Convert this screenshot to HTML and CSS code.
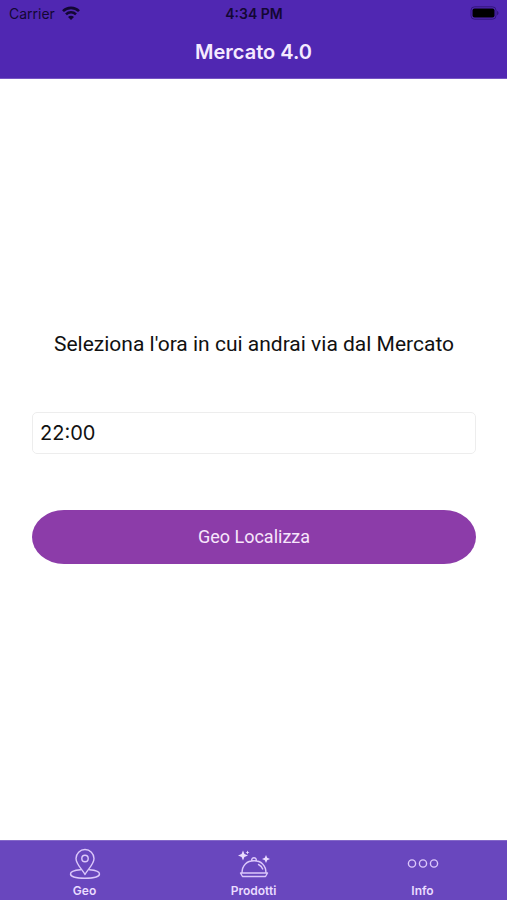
FILE: index.html
```html
<!DOCTYPE html>
<html lang="it">
<head>
<meta charset="utf-8">
<meta name="viewport" content="width=device-width, initial-scale=1">
<title>Mercato 4.0</title>
<link rel="stylesheet" href="styles.css">
</head>
<body>
<header class="top">
  <div class="status">
    <span class="carrier">Carrier
      <svg width="18" height="14" viewBox="0 0 18 14" aria-hidden="true">
        <g fill="none" stroke="currentColor" stroke-width="2.6">
          <path d="M1 5.200C5.400.8 12.600.8 17 5.200"/>
          <path d="M4 8.300C6.800 5.500 11.200 5.500 14 8.300"/>
        </g>
        <path d="M9 14 6 11C7.700 9.400 10.300 9.400 12 11Z" fill="currentColor"/>
      </svg>
    </span>
    <span class="time">4:34 PM</span>
    <svg class="battery" width="30" height="14" viewBox="0 0 30 14" aria-hidden="true">
      <rect x="2" y=".8" width="25" height="12.400" rx="3.500" fill="none" stroke="#32167c"/>
      <rect x="3.500" y="2.500" width="22" height="9" rx="2" fill="#000"/>
      <path d="M28 5v4.200c2-.7 2-3.500 0-4.200Z" fill="#32167c"/>
    </svg>
  </div>
  <h1 class="title">Mercato 4.0</h1>
</header>
<main class="content">
  <form class="form">
    <label class="prompt" for="ora">Seleziona l'ora in cui andrai via dal Mercato</label>
    <input class="field" id="ora" type="text" value="22:00">
    <button class="action" type="button">Geo Localizza</button>
  </form>
</main>
<nav class="tabs">
  <a class="tab" href="#geo">
    <svg width="32" height="32" viewBox="0 0 32 32" aria-hidden="true">
      <path d="M16 26.500C13.500 21.500 7 16.500 7 10.500a9 9 0 0 1 18 0C25 16.500 18.500 21.500 16 26.500Z"/>
      <circle cx="16" cy="10.500" r="3.200"/>
      <path d="M11.500 21.800C5 22.300 1.500 24 1.500 26c0 2.600 6 4.300 14.500 4.300s14.500-1.700 14.500-4.300c0-2-3.500-3.700-10-4.200"/>
    </svg>
    <span>Geo</span>
  </a>
  <a class="tab" href="#prodotti">
    <svg width="32" height="32" viewBox="0 0 32 32" aria-hidden="true">
      <path d="M2.500 25h27l-2 3.500h-23ZM4 25C4 17 9 12.800 16 12.800S28 17 28 25M13.700 12.800c-.5-4 5.100-4 4.600 0M20.500 16.500c2.200 1 3.500 2.500 4.200 4.500"/>
      <path class="solid" d="m5 2.500 1.400 3.600L10 7.500 6.400 8.900 5 12.500 3.600 8.900 0 7.500 3.600 6.100ZM28 7l1.200 2.800L32 11l-2.800 1.200L28 15l-1.200-2.800L24 11l2.800-1.200ZM9.500 2.500l.6 1.400 1.400.6-1.400.6-.6 1.400-.6-1.400-1.400-.6 1.400-.6Z"/>
    </svg>
    <span>Prodotti</span>
  </a>
  <a class="tab" href="#info">
    <svg width="32" height="32" viewBox="0 0 32 32" aria-hidden="true">
      <circle cx="5" cy="15.500" r="3.600"/><circle cx="16" cy="15.500" r="3.600"/><circle cx="27" cy="15.500" r="3.600"/>
    </svg>
    <span>Info</span>
  </a>
</nav>
</body>
</html>
```
FILE: styles.css
```css
* { box-sizing: border-box; }

body {
  margin: 0;
  min-height: 100vh;
  display: flex;
  flex-direction: column;
  background: #fff;
  color: #111;
  font-family: Inter, "Liberation Sans", sans-serif;
}

.top {
  background: #5027b2;
  border-bottom: 1px solid #7654c3;
}

.status {
  display: grid;
  grid-template-columns: 1fr auto 1fr;
  align-items: center;
  height: 26px;
  padding: 0 8px 0 9px;
  color: #130733;
  font-size: 14px;
}

.carrier {
  display: flex;
  align-items: center;
  gap: 7px;
}

.time { font-weight: 600; }

.battery { justify-self: end; }

.title {
  margin: 0;
  height: 52px;
  line-height: 52px;
  color: #f5eaff;
  font-size: 20px;
  font-weight: 600;
  text-align: center;
}

.content {
  flex: 1;
  display: flex;
  flex-direction: column;
  justify-content: center;
  padding: 0 31px 26px 32px;
}

.form {
  display: flex;
  flex-direction: column;
}

.prompt {
  margin-bottom: 54px;
  line-height: 28px;
  font-family: Roboto, Inter, "Liberation Sans", sans-serif;
  font-size: 21px;
  text-align: center;
  white-space: nowrap;
}

.field {
  width: 100%;
  height: 42px;
  margin-bottom: 56px;
  padding: 0 7px;
  border: 1px solid #ededed;
  border-radius: 5px;
  background: #fff;
  color: #111;
  font: 20px Inter, "Liberation Sans", sans-serif;
}

.action {
  height: 54px;
  border: 0;
  border-radius: 32px / 27px;
  background: #8c3ca9;
  color: #f7e6fb;
  font: 18px Roboto, Inter, "Liberation Sans", sans-serif;
}

.tabs {
  display: grid;
  grid-template-columns: repeat(3, 1fr);
  height: 60px;
  background: #6947be;
  border-top: 1px solid #8468c9;
}

.tab {
  display: flex;
  flex-direction: column;
  align-items: center;
  gap: 4px;
  padding-top: 7px;
  color: #eadcff;
  font-size: 12px;
  font-weight: 600;
  line-height: 14px;
  text-decoration: none;
}

.tab svg {
  fill: none;
  stroke: #dcc8fb;
  stroke-width: 1.4;
  stroke-linejoin: round;
  stroke-linecap: round;
}

.tab .solid {
  fill: #eadcff;
  stroke: none;
}
```
